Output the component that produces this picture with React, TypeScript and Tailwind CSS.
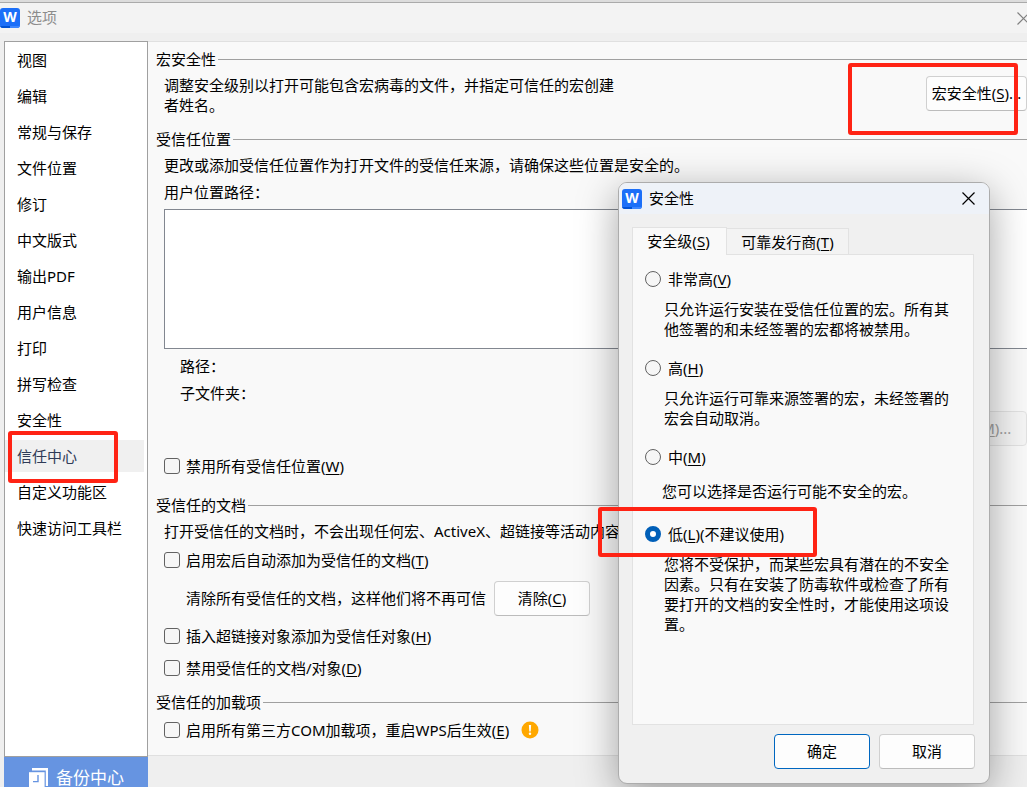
import { useState } from "react";
import type { ReactNode } from "react";

const navItems = [
  "视图", "编辑", "常规与保存", "文件位置", "修订", "中文版式", "输出PDF",
  "用户信息", "打印", "拼写检查", "安全性", "信任中心", "自定义功能区", "快速访问工具栏",
];

function Key({ k }: { k: string }) {
  return <>(<span className="underline underline-offset-2">{k}</span>)</>;
}

function WLogo() {
  return (
    <span
      aria-hidden="true"
      className="flex h-5 w-5 shrink-0 flex-col overflow-hidden rounded-[3px] bg-[#1c6ff8] text-center text-[14px] leading-[17px] font-bold text-white"
    >
      <span className="h-[18px]">W</span>
      <span className="flex h-0.5">
        <span className="w-1/2 bg-[#0052d4]" />
        <span className="w-1/2 bg-[#3d86ff]" />
      </span>
    </span>
  );
}

function CloseIcon() {
  return (
    <svg width="13" height="13" viewBox="0 0 13 13" fill="none" stroke="currentColor" strokeWidth="1.2">
      <path d="M0.5 0.5l12 12M12.5 0.5l-12 12" />
    </svg>
  );
}

function Heading({ children, className }: { children: ReactNode; className?: string }) {
  return (
    <div className={`flex items-center pl-2 ${className ?? ""}`}>
      <h2 className="shrink-0">{children}</h2>
      <span className="ml-0.5 h-px flex-1 bg-[#a0a0a0]" />
    </div>
  );
}

function Check({ id, children, className }: { id: string; children: ReactNode; className?: string }) {
  return (
    <div className={`flex items-center pl-4 ${className ?? ""}`}>
      <input
        id={id}
        type="checkbox"
        className="h-4 w-4 shrink-0 appearance-none rounded-[3px] border border-[#626262] bg-[#f6f6f6] checked:bg-[#005fb8]"
      />
      <label htmlFor={id} className="pl-1.5">{children}</label>
    </div>
  );
}

type LevelProps = {
  id: string;
  level: string;
  onPick: (id: string) => void;
  label: ReactNode;
  text: string;
  className?: string;
  textClass: string;
};

function Level({ id, level, onPick, label, text, className, textClass }: LevelProps) {
  return (
    <div className={className}>
      <div className="flex items-center pl-3">
        <input
          id={id}
          type="radio"
          name="level"
          checked={level === id}
          onChange={() => onPick(id)}
          className="h-4 w-4 shrink-0 appearance-none rounded-full border border-[#626262] bg-[#f6f6f6] checked:border-[5px] checked:border-[#005fb8] checked:bg-white"
        />
        <label htmlFor={id} className="pl-[7px]">{label}</label>
      </div>
      <p className={`w-[320px] pr-0.5 ${textClass}`}>{text}</p>
    </div>
  );
}

const buttonBase = "h-[35px] rounded border border-[#d0d0d0] border-b-[#bcbcbc] bg-[#fdfdfd] pb-0.5";

function SecurityDialog() {
  const [level, setLevel] = useState("low");
  return (
    <div
      role="dialog"
      aria-label="安全性"
      className="absolute top-[182px] left-[618px] flex w-[372px] flex-col overflow-hidden rounded-[9px] border border-[#acacac] bg-[#f0f0f0] shadow-[0_10px_40px_rgba(0,0,0,0.36)]"
    >
      <div className="flex h-[31px] items-center bg-[#eef2f8] pl-[3px]">
        <WLogo />
        <span className="ml-[7px] flex-1 pb-0.5">安全性</span>
        <button aria-label="关闭" className="mr-[14px]"><CloseIcon /></button>
      </div>
      <div className="pt-[13px] pr-[14px] pb-[14px] pl-[13px]">
        <div className="flex items-end" role="tablist">
          <button
            role="tab"
            aria-selected="true"
            className="z-10 -mb-px h-7 w-[95px] border border-b-0 border-[#e2e2e2] bg-[#f9f9f9] pr-0.5 pb-0.5"
          >
            安全级<Key k="S" />
          </button>
          <button role="tab" aria-selected="false" className="h-[26px] w-[122px] border border-b-0 border-l-0 border-[#e2e2e2] bg-[#f3f3f3]">
            可靠发行商<Key k="T" />
          </button>
        </div>
        <div role="tabpanel" className="mr-px h-[471px] border border-[#e2e2e2] bg-[#f9f9f9] pt-[14px]">
          <Level id="veryhigh" level={level} onPick={setLevel} label={<>非常高<Key k="V" /></>}
            text="只允许运行安装在受信任位置的宏。所有其他签署的和未经签署的宏都将被禁用。" textClass="mt-[10px] pl-[31px]" />
          <Level id="high" level={level} onPick={setLevel} className="mt-[19px]" label={<>高<Key k="H" /></>}
            text="只允许运行可靠来源签署的宏，未经签署的宏会自动取消。" textClass="mt-[10px] pl-[31px]" />
          <Level id="medium" level={level} onPick={setLevel} className="mt-[19px]" label={<>中<Key k="M" /></>}
            text="您可以选择是否运行可能不安全的宏。" textClass="mt-[14px] pl-[29px]" />
          <Level id="low" level={level} onPick={setLevel} className="mt-[23px]" label={<>低<Key k="L" />(不建议使用)</>}
            text="您将不受保护，而某些宏具有潜在的不安全因素。只有在安装了防毒软件或检查了所有要打开的文档的安全性时，才能使用这项设置。" textClass="mt-[10px] pl-[31px]" />
        </div>
        <div className="mt-[9px] flex justify-end gap-[9px]">
          <button className="h-[35px] w-24 rounded border border-[#0067c0] bg-[#fdfdfd] pb-0.5">确定</button>
          <button className={`w-24 ${buttonBase}`}>取消</button>
        </div>
      </div>
    </div>
  );
}

export default function App() {
  const [active, setActive] = useState("信任中心");
  return (
    <div className="relative flex h-screen flex-col overflow-hidden bg-[#efefef] font-['Noto_Sans','Noto_Sans_CJK_SC',sans-serif] text-[15px] leading-5 text-black">
      <header className="mt-0.5 flex h-[31px] shrink-0 items-center border-t border-[#aaaaaa] bg-[#f3f3f3] shadow-[0_-2px_0_#dcdcdc]">
        <WLogo />
        <h1 className="ml-[7px] flex-1 pb-0.5 text-[#8c8c8c]">选项</h1>
        <button aria-label="关闭" className="-mr-[3px] text-[#808080]"><CloseIcon /></button>
      </header>

      <div className="mt-2 flex min-h-0 flex-1">
        <nav className="ml-1 flex w-36 shrink-0 flex-col gap-1 border border-[#a0a0a0] bg-white pt-0.5 pr-[3px]">
          {navItems.map((item) => (
            <button
              key={item}
              onClick={() => setActive(item)}
              className={
                item === active
                  ? "h-8 shrink-0 bg-[#f0f0f0] pl-3 text-left text-[#2f3b57]"
                  : "h-8 shrink-0 pl-3 text-left"
              }
            >
              {item}
            </button>
          ))}
        </nav>

        <main className="mb-px min-w-0 flex-1 border-y border-[#e0e0e0] bg-[#f9f9f9] pt-[7px]">
          <Heading>宏安全性</Heading>
          <div className="mt-1.5 flex items-start justify-between pl-4">
            <p className="w-[456px]">调整安全级别以打开可能包含宏病毒的文件，并指定可信任的宏创建者姓名。</p>
            <button className={`mt-px w-[101px] whitespace-nowrap ${buttonBase}`}>宏安全性<Key k="S" />...</button>
          </div>

          <Heading className="mt-[14px]">受信任位置</Heading>
          <p className="mt-1.5 pl-4">更改或添加受信任位置作为打开文件的受信任来源，请确保这些位置是安全的。</p>
          <p className="mt-[7px] pl-4">用户位置路径：</p>
          <div className="mt-[7px] ml-4 h-[140px] border border-r-0 border-[#828790] bg-white" />
          <p className="mt-[7px] pl-8">路径：</p>
          <p className="mt-[7px] pl-8">子文件夹：</p>
          <div className="mt-2 flex justify-end">
            <button disabled className="h-[35px] w-24 rounded border border-[#e2e2e2] bg-[#f5f5f5] pb-0.5 text-[#a0a0a0]">
              修改<Key k="M" />...
            </button>
          </div>
          <Check id="disable-locations" className="mt-[10px]">禁用所有受信任位置<Key k="W" /></Check>

          <Heading className="mt-[19px]">受信任的文档</Heading>
          <p className="mt-1.5 truncate pl-4">打开受信任的文档时，不会出现任何宏、ActiveX、超链接等活动内容</p>
          <Check id="auto-trust" className="mt-[9px]">启用宏后自动添加为受信任的文档<Key k="T" /></Check>
          <div className="mt-[11px] flex items-center pl-[38px]">
            <span className="pb-0.5">清除所有受信任的文档，这样他们将不再可信</span>
            <button className={`ml-2 w-24 ${buttonBase}`}>清除<Key k="C" /></button>
          </div>
          <Check id="trust-links" className="mt-[10px]">插入超链接对象添加为受信任对象<Key k="H" /></Check>
          <Check id="disable-docs" className="mt-3">禁用受信任的文档/对象<Key k="D" /></Check>

          <Heading className="mt-[14px]">受信任的加载项</Heading>
          <div className="mt-2 flex items-center">
            <Check id="com-addins">启用所有第三方COM加载项，重启WPS后生效<Key k="E" /></Check>
            <svg className="ml-3" width="18" height="18" viewBox="0 0 18 18" aria-hidden="true">
              <circle cx="9" cy="9" r="8.5" fill="#ffa800" />
              <path d="M7.9 4h2.2l-.4 6.5H8.3z" fill="white" />
              <circle cx="9" cy="12.8" r="1.2" fill="white" />
            </svg>
          </div>
        </main>
      </div>

      <footer className="h-[30px] shrink-0 overflow-hidden pl-1">
        <button className="flex h-[42px] w-36 items-center bg-[#6694e1] pl-6 text-[17px] leading-[18px] text-white">
          <svg width="20" height="20" viewBox="0 0 20 20" aria-hidden="true">
            <path d="M4 0h16v18h-2.2V2.6H4z" fill="white" />
            <path d="M1 4.2h15.6V20H1z" fill="white" />
            <path d="M10 7v6.6H5" fill="none" stroke="#6694e1" strokeWidth="1.4" />
          </svg>
          <span className="pl-2">备份中心</span>
        </button>
      </footer>

      <SecurityDialog />

      <div className="pointer-events-none absolute top-[63px] left-[848px] h-[72px] w-[170px] rounded-[3px] border-4 border-[#ff2314]" />
      <div className="pointer-events-none absolute top-[431px] left-2 h-[52px] w-[110px] rounded-[3px] border-4 border-[#ff2314]" />
      <div className="pointer-events-none absolute top-[507px] left-[598px] h-[50px] w-[219px] rounded-[3px] border-4 border-[#ff2314]" />
    </div>
  );
}
